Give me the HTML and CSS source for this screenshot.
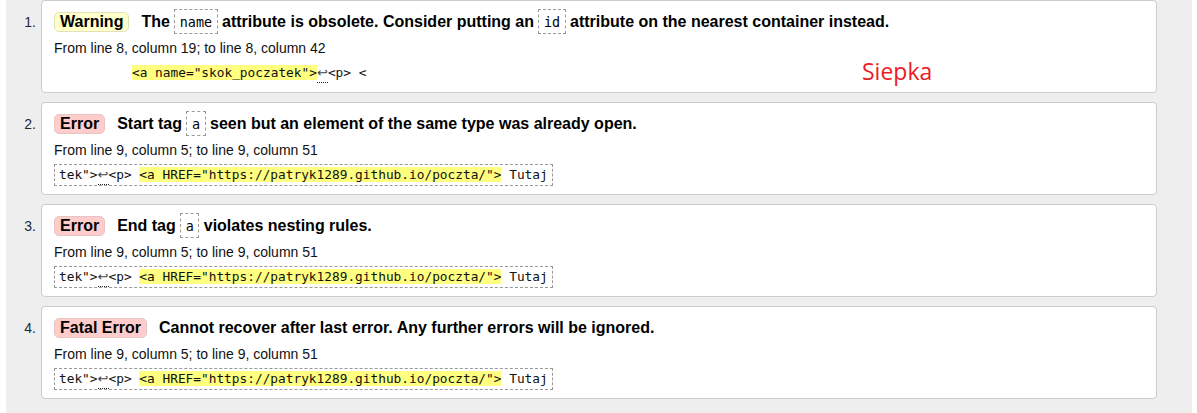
FILE: index.html
```html
<!DOCTYPE html>
<html lang="pl">
<head>
<meta charset="utf-8">
<title>Validator messages</title>
<link rel="stylesheet" href="styles.css">
</head>
<body>
<div class="page">
  <ol class="messages">
    <li class="row">
      <span class="num">1.</span>
      <div class="card">
        <p class="head"><strong class="badge warning">Warning</strong><span class="msg">The <code>name</code> attribute is obsolete. Consider putting an <code>id</code> attribute on the nearest container instead.</span></p>
        <p class="loc">From line 8, column 19; to line 8, column 42</p>
        <p class="extract plain"><b class="hl">&lt;a name="skok_poczatek"&gt;</b><span class="lf">↩</span>&lt;p&gt; &lt;</p>
        <span class="overlay">Siepka</span>
      </div>
    </li>
    <li class="row">
      <span class="num">2.</span>
      <div class="card">
        <p class="head"><strong class="badge error">Error</strong><span class="msg">Start tag <code>a</code> seen but an element of the same type was already open.</span></p>
        <p class="loc">From line 9, column 5; to line 9, column 51</p>
        <p class="extract">tek"&gt;<span class="lf">↩</span>&lt;p&gt; <b class="hl">&lt;a HREF="https://patryk1289.github.io/poczta/"&gt;</b> Tutaj</p>
      </div>
    </li>
    <li class="row">
      <span class="num">3.</span>
      <div class="card">
        <p class="head"><strong class="badge error">Error</strong><span class="msg">End tag <code>a</code> violates nesting rules.</span></p>
        <p class="loc">From line 9, column 5; to line 9, column 51</p>
        <p class="extract">tek"&gt;<span class="lf">↩</span>&lt;p&gt; <b class="hl">&lt;a HREF="https://patryk1289.github.io/poczta/"&gt;</b> Tutaj</p>
      </div>
    </li>
    <li class="row">
      <span class="num">4.</span>
      <div class="card">
        <p class="head"><strong class="badge error">Fatal Error</strong><span class="msg">Cannot recover after last error. Any further errors will be ignored.</span></p>
        <p class="loc">From line 9, column 5; to line 9, column 51</p>
        <p class="extract">tek"&gt;<span class="lf">↩</span>&lt;p&gt; <b class="hl">&lt;a HREF="https://patryk1289.github.io/poczta/"&gt;</b> Tutaj</p>
      </div>
    </li>
  </ol>
</div>
</body>
</html>
```

FILE: styles.css
```css
html, body {
  margin: 0;
  padding: 0;
  background: #fff;
}

body {
  font-family: "Liberation Sans", Arial, sans-serif;
  color: #000;
}

.page {
  margin: 0 5px 0 6px;
  background: #eeeeee;
  min-height: 413px;
  padding: 0 35px 0 0;
}

.messages {
  list-style: none;
  margin: 0;
  padding: 0;
}

.row {
  display: grid;
  grid-template-columns: 35px 1fr;
  margin-bottom: 9px;
}

.num {
  font-size: 14px;
  line-height: 20px;
  padding-top: 12px;
  padding-right: 5px;
  text-align: right;
  color: #1c2a3a;
}

.card {
  position: relative;
  background: #fff;
  border: 1px solid #cccccc;
  border-radius: 4px;
  padding: 8px 12px 8px 12px;
  height: 93px;
  box-sizing: border-box;
}

.head {
  margin: 0;
  height: 25px;
  font-size: 16px;
  line-height: 25px;
  font-weight: bold;
  white-space: nowrap;
}

.badge {
  display: inline-block;
  font-weight: bold;
  line-height: 18px;
  padding: 0 5px;
  border: 1px solid #dddddd;
  border-radius: 5px;
  margin-right: 12px;
}

.badge.warning {
  background: #ffffcc;
  border-color: #e2e2b8;
}

.badge.error {
  background: #ffcccc;
  border-color: #e6c4c4;
}

.head code {
  display: inline-block;
  box-sizing: border-box;
  height: 25px;
  font-family: "DejaVu Sans Mono", "Liberation Mono", monospace;
  font-weight: normal;
  font-size: 13.4px;
  line-height: 17px;
  padding: 4px 4.5px 2px;
  border: 1px dashed #999999;
  vertical-align: top;
}

.loc {
  margin: 4px 0 0;
  font-size: 14px;
  line-height: 20px;
  color: #111;
}

.extract {
  display: inline-block;
  margin: 4px 0 0;
  font-family: "DejaVu Sans Mono", "Liberation Mono", monospace;
  font-size: 12.8px;
  line-height: 20px;
  padding: 0 4px;
  border: 1px dashed #999999;
  white-space: pre;
  color: #111;
}

.extract.plain {
  border-color: transparent;
  margin-left: 73px;
}

.hl {
  font-weight: normal;
  background: #ffff80;
}

.lf {
  display: inline-block;
  width: 11px;
  height: 20px;
  box-sizing: border-box;
  border-bottom: 1px dotted #222;
  text-align: center;
  vertical-align: top;
  font-family: "DejaVu Sans", "Noto Sans", sans-serif;
  font-size: 13px;
  color: #444;
}

.overlay {
  position: absolute;
  left: 820px;
  top: 59px;
  font-family: "Open Sans", sans-serif;
  font-size: 23px;
  line-height: 1;
  color: #ed1c24;
}
```
